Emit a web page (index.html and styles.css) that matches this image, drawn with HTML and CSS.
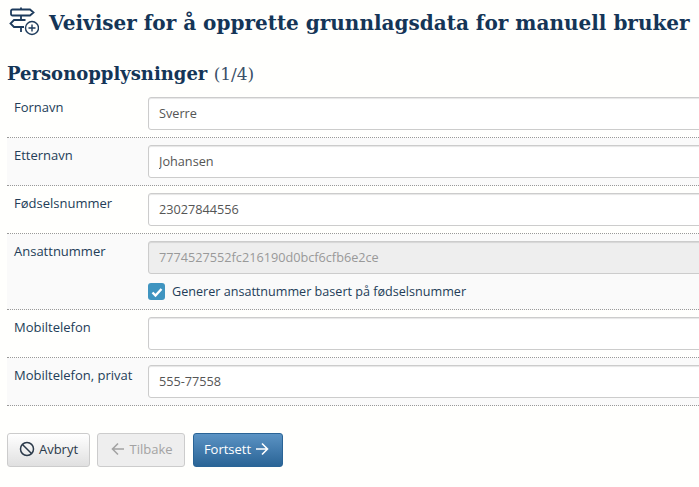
FILE: index.html
```html
<!DOCTYPE html>
<html lang="en">
<head>
    <meta charset="UTF-8">
    <title>Veiviser</title>
    <link rel="stylesheet" href="styles.css">
</head>
<body>
    <div class="page">
        <h1 class="title">
            <svg class="title-icon" width="32" height="32" viewBox="0 0 32 32" fill="none" stroke="#1d3b5c" stroke-width="1.800">
                <path d="M14 0.500v2M14 9v4M14 20v5"/>
                <path d="M5.500 2.500H23l3.500 3-3.500 3H5.500a1.500 1.500 0 0 1-1.500-1.500V4a1.500 1.500 0 0 1 1.500-1.500z"/>
                <path d="M18.500 13H7l-3.500 3.500L7 20h10"/>
                <circle cx="25" cy="21" r="6.500" fill="#fffffd" stroke-width="1.400"/>
                <path d="M25 17.500v7M21.500 21h7" stroke-width="1.400"/>
            </svg>
            <span>Veiviser for å opprette grunnlagsdata for manuell bruker</span>
        </h1>

        <h2 class="step">Personopplysninger <span class="step-count">(1/4)</span></h2>

        <form class="form">
            <div class="row">
                <label class="row-label">Fornavn</label>
                <div class="row-field"><input class="text-input" type="text" value="Sverre"></div>
            </div>
            <div class="row row-alt">
                <label class="row-label">Etternavn</label>
                <div class="row-field"><input class="text-input" type="text" value="Johansen"></div>
            </div>
            <div class="row">
                <label class="row-label">Fødselsnummer</label>
                <div class="row-field"><input class="text-input" type="text" value="23027844556"></div>
            </div>
            <div class="row row-alt">
                <label class="row-label">Ansattnummer</label>
                <div class="row-field">
                    <input class="text-input" type="text" value="7774527552fc216190d0bcf6cfb6e2ce" disabled>
                    <div class="check-line">
                        <span class="check-box">
                            <svg width="14" height="14" viewBox="0 0 14 14" fill="none" stroke="#fff" stroke-width="2.400"><path d="M2.500 7.500l3 3 6-6.500"/></svg>
                        </span>
                        <span>Generer ansattnummer basert på fødselsnummer</span>
                    </div>
                </div>
            </div>
            <div class="row">
                <label class="row-label">Mobiltelefon</label>
                <div class="row-field"><input class="text-input" type="text" value=""></div>
            </div>
            <div class="row row-alt">
                <label class="row-label">Mobiltelefon, privat</label>
                <div class="row-field"><input class="text-input" type="text" value="555-77558"></div>
            </div>
        </form>

        <div class="buttons">
            <button class="btn" type="button">
                <svg width="16" height="16" viewBox="0 0 16 16" fill="none" stroke="#2b3a4a" stroke-width="1.500"><circle cx="8" cy="8" r="6.500"/><path d="M3.500 3.500l9 9"/></svg>
                Avbryt
            </button>
            <button class="btn btn-disabled" type="button" disabled>
                <svg width="14" height="14" viewBox="0 0 14 14" fill="none" stroke="#a3a3a3" stroke-width="1.600"><path d="M13 7H1.500M7 1.500L1.500 7 7 12.500"/></svg>
                Tilbake
            </button>
            <button class="btn btn-primary" type="button">
                Fortsett
                <svg width="14" height="14" viewBox="0 0 14 14" fill="none" stroke="#fff" stroke-width="1.600"><path d="M1 7h11.500M7 1.500L12.500 7 7 12.500"/></svg>
            </button>
        </div>
    </div>
</body>
</html>
```

FILE: styles.css
```css
html, body {
    margin: 0;
    padding: 0;
    height: 100%;
    overflow: hidden;
}
body {
    font-family: "Open Sans", "Noto Sans", sans-serif;
    font-size: 13px;
    color: #233d58;
    background-color: #fffffd;
}
.page {
    padding: 0 0 0 7px;
}
.title {
    display: flex;
    align-items: center;
    gap: 10px;
    height: 42px;
    margin: 0;
    padding: 2px 0 0 0;
    font-family: "DejaVu Serif", serif;
    font-size: 20px;
    font-weight: bold;
    color: #143557;
    white-space: nowrap;
}
.title-icon {
    flex: none;
}
.step {
    margin: 15px 0 0 0;
    height: 31px;
    font-family: "DejaVu Serif", serif;
    font-size: 18px;
    font-weight: bold;
    line-height: 29px;
    color: #143557;
}
.step-count {
    font-size: 17px;
    font-weight: normal;
    color: #3a5068;
}
.row {
    display: flex;
    padding: 7px 0 7px 7px;
    border-bottom: 1px dotted #999;
}
.row-alt {
    background-color: #fafafa;
}
.row-label {
    flex: none;
    width: 134px;
    line-height: 20px;
}
.row-field {
    flex: 1;
    min-width: 0;
    margin-right: -20px;
}
.text-input {
    display: block;
    box-sizing: border-box;
    width: 100%;
    height: 33px;
    padding: 0 10px 2px;
    border: 1px solid #ccc;
    border-radius: 3px;
    box-shadow: inset 0 1px 1px rgba(0, 0, 0, 0.1);
    background-color: #fff;
    font-family: inherit;
    font-size: 12.700px;
    color: #555;
}
.text-input:disabled {
    background-color: #eee;
    color: #999;
}
.check-line {
    display: flex;
    align-items: center;
    gap: 7px;
    height: 19px;
    margin: 8px 0 1px;
    font-size: 12.600px;
}
.check-box {
    display: flex;
    align-items: center;
    justify-content: center;
    width: 17px;
    height: 17px;
    border-radius: 3px;
    background-color: #3f94c0;
}
.buttons {
    display: flex;
    gap: 7px;
    margin-top: 27px;
}
.btn {
    display: flex;
    align-items: center;
    justify-content: center;
    gap: 4px;
    box-sizing: border-box;
    height: 34px;
    width: 83px;
    padding: 0 0 2px;
    border: 1px solid #ccc;
    border-radius: 3px;
    background: linear-gradient(#fff, #e0e0e0);
    font-family: inherit;
    font-size: 13px;
    color: #2b3a4a;
}
.btn-disabled {
    width: 88px;
    padding-left: 2px;
    background: #eee;
    color: #a3a3a3;
}
.btn-primary {
    width: 90px;
    margin-left: 1px;
    padding-right: 3px;
    border-color: #2a6496;
    background: linear-gradient(#5b93c4, #2a6496);
    color: #fff;
}
```
